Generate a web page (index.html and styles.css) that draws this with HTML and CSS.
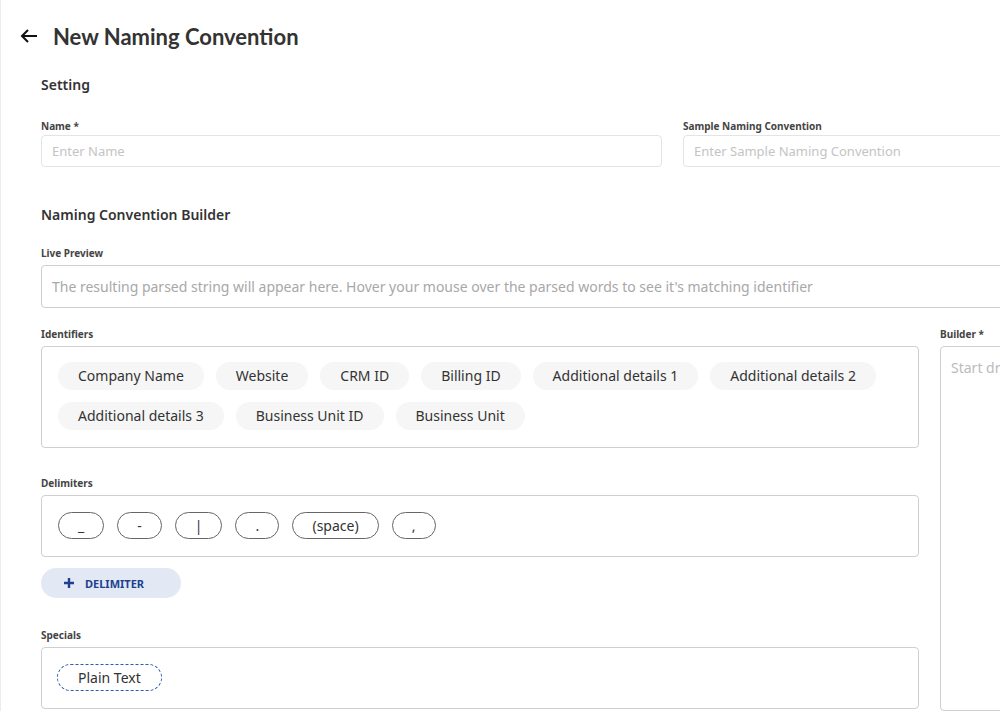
FILE: index.html
```html
<!DOCTYPE html>
<html>
<head>
    <meta charset="UTF-8">
    <title>New Naming Convention</title>
    <link rel="stylesheet" href="styles.css">
</head>
<body>
    <div class="page">
        <div class="head">
            <span class="back">
                <svg width="18" height="14" viewBox="0 0 18 14"><path d="M8 1 2 7l6 6M2 7h15" fill="none" stroke="#111" stroke-width="2"/></svg>
            </span>
            <h1>New Naming Convention</h1>
        </div>

        <div class="content">
            <h2>Setting</h2>
            <div class="row-2">
                <div class="field tight">
                    <label>Name *</label>
                    <div class="input">Enter Name</div>
                </div>
                <div class="field tight">
                    <label>Sample Naming Convention</label>
                    <div class="input">Enter Sample Naming Convention</div>
                </div>
            </div>

            <h2 class="builder-title">Naming Convention Builder</h2>
            <div class="field">
                <label>Live Preview</label>
                <div class="preview">The resulting parsed string will appear here. Hover your mouse over the parsed words to see it's matching identifier</div>
            </div>

            <div class="builder">
                <div class="parts">
                    <div class="field">
                        <label>Identifiers</label>
                        <div class="box">
                            <span class="chip">Company Name</span>
                            <span class="chip">Website</span>
                            <span class="chip">CRM ID</span>
                            <span class="chip">Billing ID</span>
                            <span class="chip">Additional details 1</span>
                            <span class="chip">Additional details 2</span>
                            <span class="chip">Additional details 3</span>
                            <span class="chip">Business Unit ID</span>
                            <span class="chip">Business Unit</span>
                        </div>
                    </div>

                    <div class="field delims">
                        <label>Delimiters</label>
                        <div class="box">
                            <span class="chip line">_</span>
                            <span class="chip line">-</span>
                            <span class="chip line">|</span>
                            <span class="chip line">.</span>
                            <span class="chip line">(space)</span>
                            <span class="chip line">,</span>
                        </div>
                    </div>
                    <button class="add-btn">
                        <svg class="plus" width="10" height="10" viewBox="0 0 10 10"><path d="M5 0v10M0 5h10" stroke="#213f8f" stroke-width="2.4"/></svg>
                        Delimiter
                    </button>

                    <div class="field specials">
                        <label>Specials</label>
                        <div class="box">
                            <span class="chip dashed">Plain Text</span>
                        </div>
                    </div>
                </div>

                <div class="field canvas">
                    <label>Builder *</label>
                    <div class="drop">Start dragging identifiers and delimiters here</div>
                </div>
            </div>
        </div>
    </div>
</body>
</html>
```

FILE: styles.css
```css
html,body{margin:0;padding:0;}
body{
    font-family: "Noto Sans", "Lato", sans-serif;
    color: #333333;
    background: #ffffff;
    overflow: hidden;
    width: 1000px;
    height: 717px;
}
.page{
    width: 1400px;
    border-left: 1px solid #ececec;
}

.head{
    display: flex;
    align-items: center;
    height: 72px;
    padding-left: 19px;
}
.back{
    display: flex;
    width: 33px;
}
.head h1{
    margin: 0;
    font-family: "Lato", "Noto Sans", sans-serif;
    font-size: 22px;
    font-weight: 700;
    color: #333333;
}

.content{
    padding-left: 40px;
    width: 1259px;
}
.content h2{
    margin: 3px 0 24px;
    font-size: 14px;
    line-height: 20px;
    font-weight: 600;
    color: #333333;
}
.content h2.builder-title{
    margin: 38px 0 21px;
}

.field label{
    display: block;
    font-size: 10px;
    line-height: 14px;
    font-weight: 700;
    color: #444444;
    margin-bottom: 5px;
}
.field.tight label{
    margin-bottom: 2px;
}

.row-2{
    display: grid;
    grid-template-columns: 621px 621px;
    column-gap: 21px;
}
.input{
    height: 30px;
    line-height: 30px;
    padding-left: 10px;
    border: 1px solid #e4e4e4;
    border-radius: 4px;
    font-size: 13px;
    color: #c4c4c4;
}

.preview{
    height: 41px;
    line-height: 41px;
    padding-left: 10px;
    border: 1px solid #cfcfcf;
    border-radius: 4px;
    font-size: 14px;
    color: #a8a8a8;
    white-space: nowrap;
}

.builder{
    display: flex;
    gap: 21px;
    margin-top: 19px;
}
.parts{
    width: 878px;
}
.box{
    display: flex;
    flex-wrap: wrap;
    align-items: flex-start;
    gap: 12px;
    padding: 15px 16px 17px;
    border: 1px solid #cfcfcf;
    border-radius: 4px;
}
.chip{
    box-sizing: border-box;
    display: block;
    height: 28px;
    line-height: 28px;
    padding: 0 20px;
    border-radius: 14px;
    background: #f6f6f6;
    font-size: 14px;
    color: #333333;
    white-space: nowrap;
}
.delims{
    margin-top: 28px;
}
.delims .box{
    gap: 13px;
    padding: 16px 16px 17px;
}
.chip.line{
    min-width: 44px;
    height: 27px;
    line-height: 25px;
    padding: 0 19px;
    text-align: center;
    background: #ffffff;
    border: 1px solid #666666;
}

.add-btn{
    display: flex;
    align-items: center;
    margin-top: 11px;
    width: 140px;
    height: 30px;
    padding: 0 0 0 23px;
    border: none;
    border-radius: 15px;
    background: #e3e9f4;
    color: #213f8f;
    font-family: inherit;
    font-size: 11px;
    font-weight: 700;
    text-transform: uppercase;
}
.add-btn .plus{
    margin-right: 11px;
}

.specials{
    margin-top: 30px;
}
.specials .box{
    padding: 16px 15px 17px;
}
.chip.dashed{
    height: 27px;
    line-height: 25px;
    padding: 0 20px;
    background: #ffffff;
    border: 1px dashed #2a5cb0;
}

.canvas{
    width: 360px;
}
.drop{
    height: 341px;
    padding: 11px 10px;
    border: 1px solid #cfcfcf;
    border-radius: 4px;
    font-size: 14px;
    color: #bbbbbb;
    white-space: nowrap;
}
```
